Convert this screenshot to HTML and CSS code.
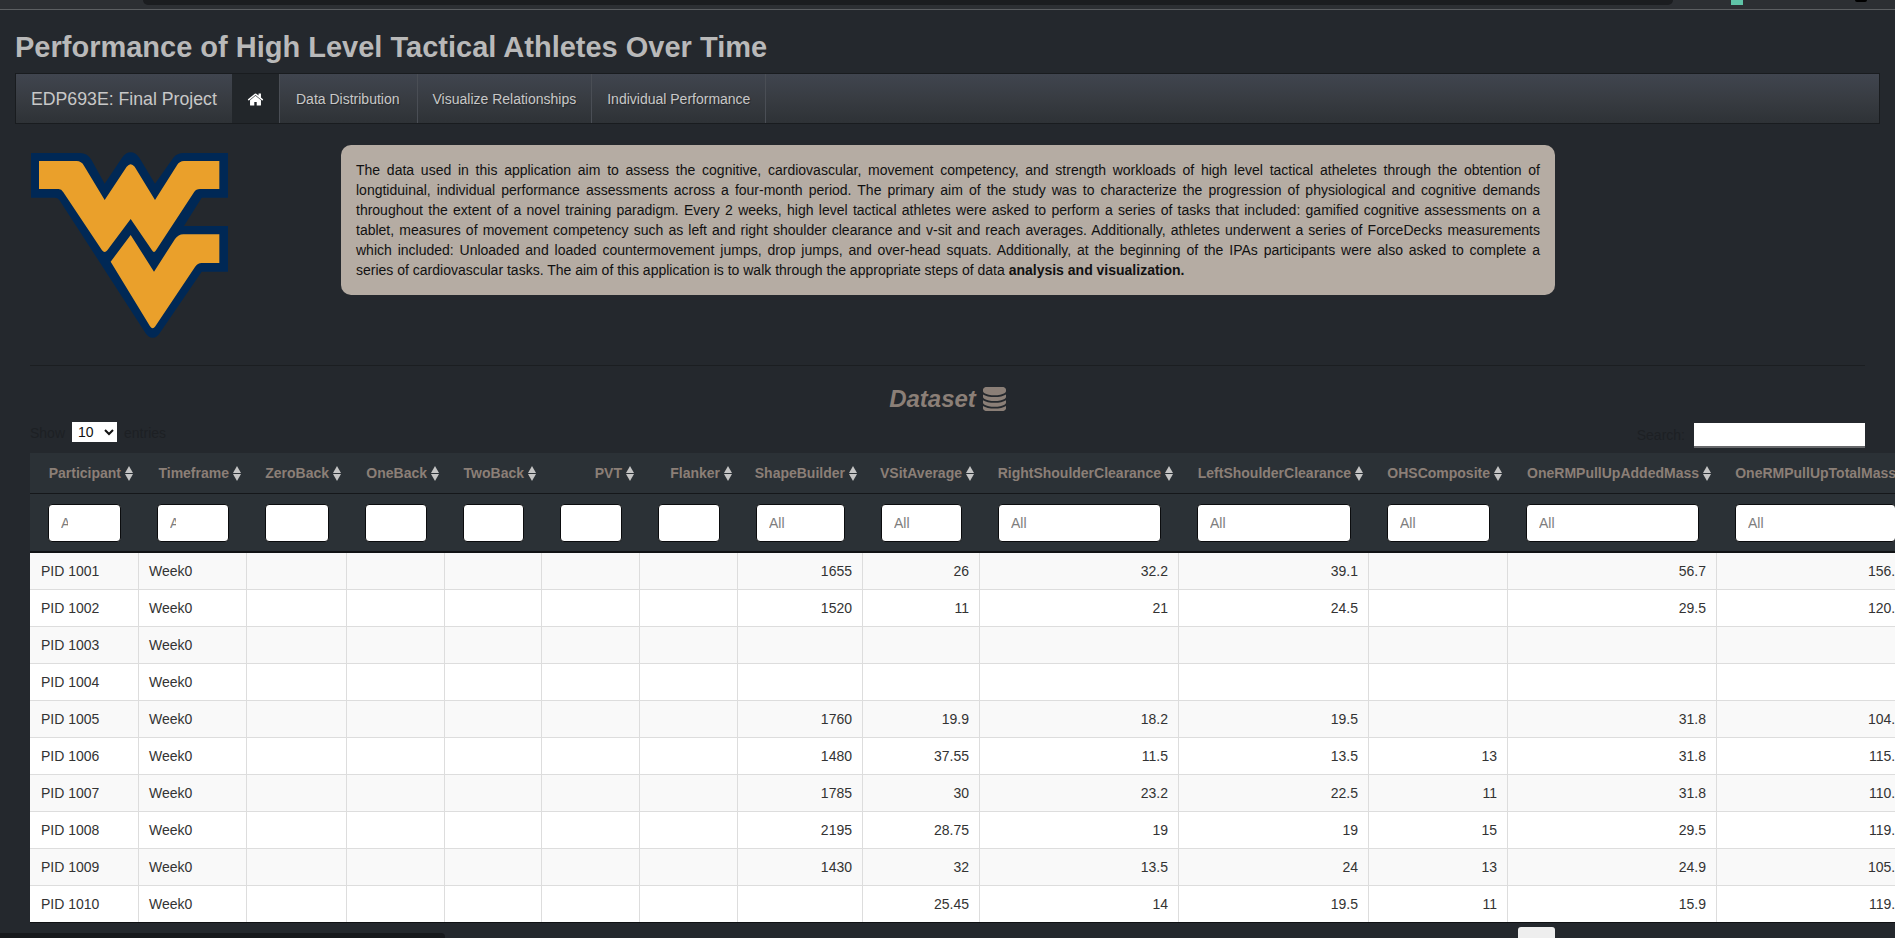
FILE: index.html
```html
<!DOCTYPE html>
<html>
<head>
    <title>Performance of High Level Tactical Athletes Over Time</title>
    <meta charset="UTF-8"/>
    <link rel="stylesheet" href="styles.css">
</head>
<body>
    <div class="browser-strip">
        <div class="browser-pill"></div>
        <div class="browser-badge"></div>
        <div class="browser-dot"></div>
    </div>

    <div class="page">
        <h2 class="page-title">Performance of High Level Tactical Athletes Over Time</h2>

        <nav class="navbar">
            <span class="navbar-brand">EDP693E: Final Project</span>
            <a class="nav-link active">
                <svg class="home-icon" viewBox="0 0 1792 1792"><path d="M1472 992v480q0 26-19 45t-45 19h-384v-384h-256v384h-384q-26 0-45-19t-19-45v-480q0-1 .5-3t.5-3l575-474 575 474q1 2 1 6zm223-69l-62 74q-8 9-21 11h-3q-13 0-21-7l-692-577-692 577q-12 8-24 7-13-2-21-11l-62-74q-8-10-7-23.500t11-21.500l719-599q32-26 76-26t76 26l244 204v-195q0-14 9-23t23-9h192q14 0 23 9t9 23v408l219 182q10 8 11 21.500t-7 23.500z"/></svg>
            </a>
            <a class="nav-link wide">Data Distribution</a>
            <a class="nav-link">Visualize Relationships</a>
            <a class="nav-link">Individual Performance</a>
        </nav>

        <div class="intro">
            <svg class="logo" viewBox="0 0 660 600">
                <path class="logo-edge" d="M33 24H180Q203 24 215 46L254 116L306 38Q318 22 332 22Q346 22 358 38L405 116L460 38Q472 24 490 24H624V158H545L492 243H624V380H545L422 560Q412 578 398 578Q384 578 374 560L118 165Q113 158 105 158H33Z"/>
                <path class="logo-fill" d="M57 48H170Q184 48 192 62L254 165L320 65Q332 50 344 65L405 165L470 62Q478 48 492 48H598V132H540Q528 132 522 142L408 316Q402 326 396 316L332 222L262 316Q254 326 246 316L130 142Q124 132 116 132H57Z"/>
                <path class="logo-fill" d="M272 350L332 270L402 380L465 282Q475 268 490 268H598V354H545Q533 354 525 366L406 544Q398 556 390 544Z"/>
            </svg>
            <div class="intro-text">
                The data used in this application aim to assess the cognitive, cardiovascular, movement competency, and strength workloads of high level tactical atheletes through the obtention of longtiduinal, individual performance assessments across a four-month period. The primary aim of the study was to characterize the progression of physiological and cognitive demands throughout the extent of a novel training paradigm. Every 2 weeks, high level tactical athletes were asked to perform a series of tasks that included: gamified cognitive assessments on a tablet, measures of movement competency such as left and right shoulder clearance and v-sit and reach averages. Additionally, athletes underwent a series of ForceDecks measurements which included: Unloaded and loaded countermovement jumps, drop jumps, and over-head squats. Additionally, at the beginning of the IPAs participants were also asked to complete a series&nbsp;of cardiovascular tasks. The aim of this application is to walk through the appropriate steps of data <b>analysis and visualization.</b>
            </div>
        </div>

        <div class="data-section">
            <hr class="divider">
            <h3 class="section-title">Dataset
                <svg class="db-icon" viewBox="128 128 1536 1536"><path d="M896 768q237 0 443-43t325-127v170q0 69-103 128t-280 93.500-385 34.500-385-34.500-280-93.500-103-128v-170q119 84 325 127t443 43zm0 768q237 0 443-43t325-127v170q0 69-103 128t-280 93.500-385 34.500-385-34.500-280-93.500-103-128v-170q119 84 325 127t443 43zm0-384q237 0 443-43t325-127v170q0 69-103 128t-280 93.500-385 34.500-385-34.500-280-93.500-103-128v-170q119 84 325 127t443 43zm0-1152q208 0 385 34.500t280 93.500 103 128v128q0 69-103 128t-280 93.500-385 34.500-385-34.500-280-93.500-103-128v-128q0-69 103-128t280-93.500 385-34.500z"/></svg>
            </h3>

            <div class="table-controls">
                <label class="length-label">Show
                    <select class="length-select"><option>10</option></select>
                    entries</label>
                <label class="search-label">Search:
                    <input class="search-input" type="text">
                </label>
            </div>

            <div class="table-wrap">
                <table class="data-table">
                    <colgroup>
                        <col class="w109"><col class="w108"><col class="w100"><col class="w98"><col class="w97"><col class="w98"><col class="w98"><col class="w125"><col class="w117"><col class="w199"><col class="w190"><col class="w139"><col class="w209"><col class="w197">
                    </colgroup>
                    <thead>
                        <tr class="head-row">
                            <th>Participant<i class="sort"></i></th>
                            <th>Timeframe<i class="sort"></i></th>
                            <th>ZeroBack<i class="sort"></i></th>
                            <th>OneBack<i class="sort"></i></th>
                            <th>TwoBack<i class="sort"></i></th>
                            <th>PVT<i class="sort"></i></th>
                            <th>Flanker<i class="sort"></i></th>
                            <th>ShapeBuilder<i class="sort"></i></th>
                            <th>VSitAverage<i class="sort"></i></th>
                            <th>RightShoulderClearance<i class="sort"></i></th>
                            <th>LeftShoulderClearance<i class="sort"></i></th>
                            <th>OHSComposite<i class="sort"></i></th>
                            <th>OneRMPullUpAddedMass<i class="sort"></i></th>
                            <th>OneRMPullUpTotalMass<i class="sort"></i></th>
                        </tr>
                        <tr class="filter-row">
                            <td><input class="filter clipped" type="text" placeholder="All"></td>
                            <td><input class="filter clipped" type="text" placeholder="All"></td>
                            <td><input class="filter" type="text"></td>
                            <td><input class="filter" type="text"></td>
                            <td><input class="filter" type="text"></td>
                            <td><input class="filter" type="text"></td>
                            <td><input class="filter" type="text"></td>
                            <td><input class="filter" type="text" placeholder="All"></td>
                            <td><input class="filter" type="text" placeholder="All"></td>
                            <td><input class="filter" type="text" placeholder="All"></td>
                            <td><input class="filter" type="text" placeholder="All"></td>
                            <td><input class="filter" type="text" placeholder="All"></td>
                            <td><input class="filter" type="text" placeholder="All"></td>
                            <td><input class="filter" type="text" placeholder="All"></td>
                        </tr>
                    </thead>
                    <tbody>
                        <tr><td>PID 1001</td><td>Week0</td><td></td><td></td><td></td><td></td><td></td><td>1655</td><td>26</td><td>32.2</td><td>39.1</td><td></td><td>56.7</td><td>156.7</td></tr>
                        <tr><td>PID 1002</td><td>Week0</td><td></td><td></td><td></td><td></td><td></td><td>1520</td><td>11</td><td>21</td><td>24.5</td><td></td><td>29.5</td><td>120.5</td></tr>
                        <tr><td>PID 1003</td><td>Week0</td><td></td><td></td><td></td><td></td><td></td><td></td><td></td><td></td><td></td><td></td><td></td><td></td></tr>
                        <tr><td>PID 1004</td><td>Week0</td><td></td><td></td><td></td><td></td><td></td><td></td><td></td><td></td><td></td><td></td><td></td><td></td></tr>
                        <tr><td>PID 1005</td><td>Week0</td><td></td><td></td><td></td><td></td><td></td><td>1760</td><td>19.9</td><td>18.2</td><td>19.5</td><td></td><td>31.8</td><td>104.8</td></tr>
                        <tr><td>PID 1006</td><td>Week0</td><td></td><td></td><td></td><td></td><td></td><td>1480</td><td>37.55</td><td>11.5</td><td>13.5</td><td>13</td><td>31.8</td><td>115.8</td></tr>
                        <tr><td>PID 1007</td><td>Week0</td><td></td><td></td><td></td><td></td><td></td><td>1785</td><td>30</td><td>23.2</td><td>22.5</td><td>11</td><td>31.8</td><td>110.8</td></tr>
                        <tr><td>PID 1008</td><td>Week0</td><td></td><td></td><td></td><td></td><td></td><td>2195</td><td>28.75</td><td>19</td><td>19</td><td>15</td><td>29.5</td><td>119.5</td></tr>
                        <tr><td>PID 1009</td><td>Week0</td><td></td><td></td><td></td><td></td><td></td><td>1430</td><td>32</td><td>13.5</td><td>24</td><td>13</td><td>24.9</td><td>105.9</td></tr>
                        <tr><td>PID 1010</td><td>Week0</td><td></td><td></td><td></td><td></td><td></td><td></td><td>25.45</td><td>14</td><td>19.5</td><td>11</td><td>15.9</td><td>119.9</td></tr>
                    </tbody>
                </table>
            </div>
        </div>
    </div>

    <div class="bottom-bar">
        <div class="bottom-tab"></div>
        <div class="bottom-thumb"></div>
    </div>
</body>
</html>
```

FILE: styles.css
```css
html, body {
    height: 938px;
    overflow: hidden;
}
body {
    margin: 0;
    font-family: "Liberation Sans", Arial, sans-serif;
    font-size: 14px;
    line-height: 20px;
    background-color: #24282d;
    color: #c8c8c8;
}

/* strip of the browser chrome at the very top */
.browser-strip {
    display: flex;
    height: 9px;
    border-bottom: 1px solid #5c5f62;
    background-color: #2c2f33;
}
.browser-pill {
    width: 1530px;
    height: 5px;
    margin-left: 143px;
    background-color: #1b1d20;
    border-radius: 0 0 8px 8px;
}
.browser-badge {
    width: 12px;
    height: 5px;
    margin-left: 58px;
    background-color: #5fc4a8;
}
.browser-dot {
    width: 12px;
    height: 2px;
    margin-left: 112px;
    background-color: #000;
    border-radius: 0 0 6px 6px;
}

.page {
    padding: 0 15px;
}
.page-title {
    margin: 21px 0 9px;
    font-size: 29px;
    line-height: 33px;
    font-weight: bold;
    color: #b9b9b9;
}

/* navbar */
.navbar {
    display: flex;
    height: 51px;
    box-sizing: border-box;
    border: 1px solid #191c1f;
    background-image: linear-gradient(#40454f, #383c42 50%, #2e3236);
}
.navbar-brand {
    width: 216px;
    box-sizing: border-box;
    padding: 15px 0 0 15px;
    font-size: 17.7px;
    color: #c8c8c8;
}
.nav-link {
    display: block;
    padding: 15px;
    border-right: 1px solid #4a4e55;
    color: #c8c8c8;
    text-shadow: 1px 1px 1px rgba(0, 0, 0, 0.3);
}
.nav-link.wide {
    padding-left: 16px;
    padding-right: 17px;
}
.nav-link.active {
    width: 48px;
    box-sizing: border-box;
    background: #22262a;
}
.home-icon {
    display: block;
    width: 17px;
    height: 17px;
    margin-top: 2px;
    fill: #fff;
}

/* logo + intro text */
.intro {
    display: flex;
    align-items: flex-start;
    height: 241px;
    padding: 21px 0 0 5px;
    box-sizing: border-box;
}
.logo {
    width: 220px;
    height: 200px;
    flex: none;
}
.logo-edge {
    fill: #002855;
}
.logo-fill {
    fill: #eaa02b;
}
.intro-text {
    width: 1184px;
    margin-left: 101px;
    padding: 15px;
    border-radius: 10px;
    background-color: #b5aca3;
    color: #111;
    text-align: justify;
}

/* dataset */
.data-section {
    padding: 0 15px;
}
.divider {
    height: 1px;
    margin: 0;
    border: none;
    background-color: #1b1e21;
}
.section-title {
    display: flex;
    justify-content: center;
    align-items: center;
    gap: 7px;
    height: 47px;
    margin: 9px 0 0;
    font-size: 24px;
    font-style: italic;
    font-weight: bold;
    color: #8b7f77;
}
.db-icon {
    width: 23px;
    height: 24px;
    fill: #8b7f77;
}
.table-controls {
    display: flex;
    justify-content: space-between;
    height: 31px;
    color: #1d2024;
}
.length-label {
    display: flex;
    align-items: flex-start;
    gap: 7px;
    line-height: 22px;
}
.length-select {
    width: 45px;
    height: 20px;
    padding: 0 0 0 2px;
    border: none;
    border-radius: 0;
    background-color: #fff;
    color: #111;
    font-family: "Liberation Sans", Arial, sans-serif;
    font-size: 14px;
}
.search-label {
    display: flex;
    align-items: flex-start;
    gap: 9px;
    line-height: 26px;
}
.search-input {
    width: 171px;
    height: 25px;
    margin-top: 1px;
    box-sizing: border-box;
    padding: 0 6px;
    border: none;
    border-bottom: 2px solid #67686b;
    background-color: #fff;
}

.table-wrap {
    height: 469px;
    margin-right: -30px;
    overflow: hidden;
    border-bottom: 1px solid #101214;
}
.data-table {
    width: 1884px;
    table-layout: fixed;
    border-collapse: separate;
    border-spacing: 0;
}
.w97 { width: 97px; }
.w98 { width: 98px; }
.w100 { width: 100px; }
.w108 { width: 108px; }
.w109 { width: 109px; }
.w117 { width: 117px; }
.w125 { width: 125px; }
.w139 { width: 139px; }
.w190 { width: 190px; }
.w197 { width: 197px; }
.w199 { width: 199px; }
.w209 { width: 209px; }

.head-row th {
    height: 41px;
    box-sizing: border-box;
    padding: 0 5px 0 0;
    border-bottom: 1px solid #15171a;
    background-color: #2b3136;
    color: #8b7f77;
    font-size: 14px;
    text-align: right;
    white-space: nowrap;
}
.sort {
    display: inline-block;
    position: relative;
    width: 9px;
    height: 15px;
    margin-left: 4px;
    vertical-align: -3px;
}
.sort:before, .sort:after {
    content: "";
    position: absolute;
    left: 0;
    border-left: 4.5px solid transparent;
    border-right: 4.5px solid transparent;
}
.sort:before {
    top: 0;
    border-bottom: 7px solid #c4c4c4;
}
.sort:after {
    bottom: 0;
    border-top: 7px solid #c4c4c4;
}
.filter-row td {
    height: 59px;
    box-sizing: border-box;
    padding: 0 18px;
    border-bottom: 2px solid #111315;
    background-color: #2b3136;
}
.filter {
    display: block;
    width: 100%;
    height: 38px;
    box-sizing: border-box;
    padding: 0 12px;
    border: 1px solid #0b0c0e;
    border-radius: 4px;
    background-color: #fff;
    font-family: "Liberation Sans", Arial, sans-serif;
    font-size: 14px;
}
.filter::placeholder {
    color: #7d7d7d;
}
.filter.clipped {
    padding-right: 52px;
}

tbody td {
    height: 37px;
    box-sizing: border-box;
    padding: 0 10px;
    border-right: 1px solid #ddd;
    border-bottom: 1px solid #ddd;
    background-color: #fff;
    color: #333;
    text-align: right;
    white-space: nowrap;
}
tbody tr:nth-child(odd) td {
    background-color: #f9f9f9;
}
tbody td:nth-child(1), tbody td:nth-child(2) {
    text-align: left;
}
tbody td:nth-child(1) {
    padding-left: 11px;
}

/* bits of the window that peek in at the bottom */
.bottom-bar {
    display: flex;
    align-items: flex-end;
    height: 11px;
    margin-top: 4px;
}
.bottom-tab {
    width: 445px;
    height: 5px;
    background-color: #17191c;
    border-radius: 0 4px 0 0;
}
.bottom-thumb {
    width: 37px;
    height: 11px;
    margin-left: 1073px;
    background-color: #eee;
    border-radius: 3px 3px 0 0;
}
```
